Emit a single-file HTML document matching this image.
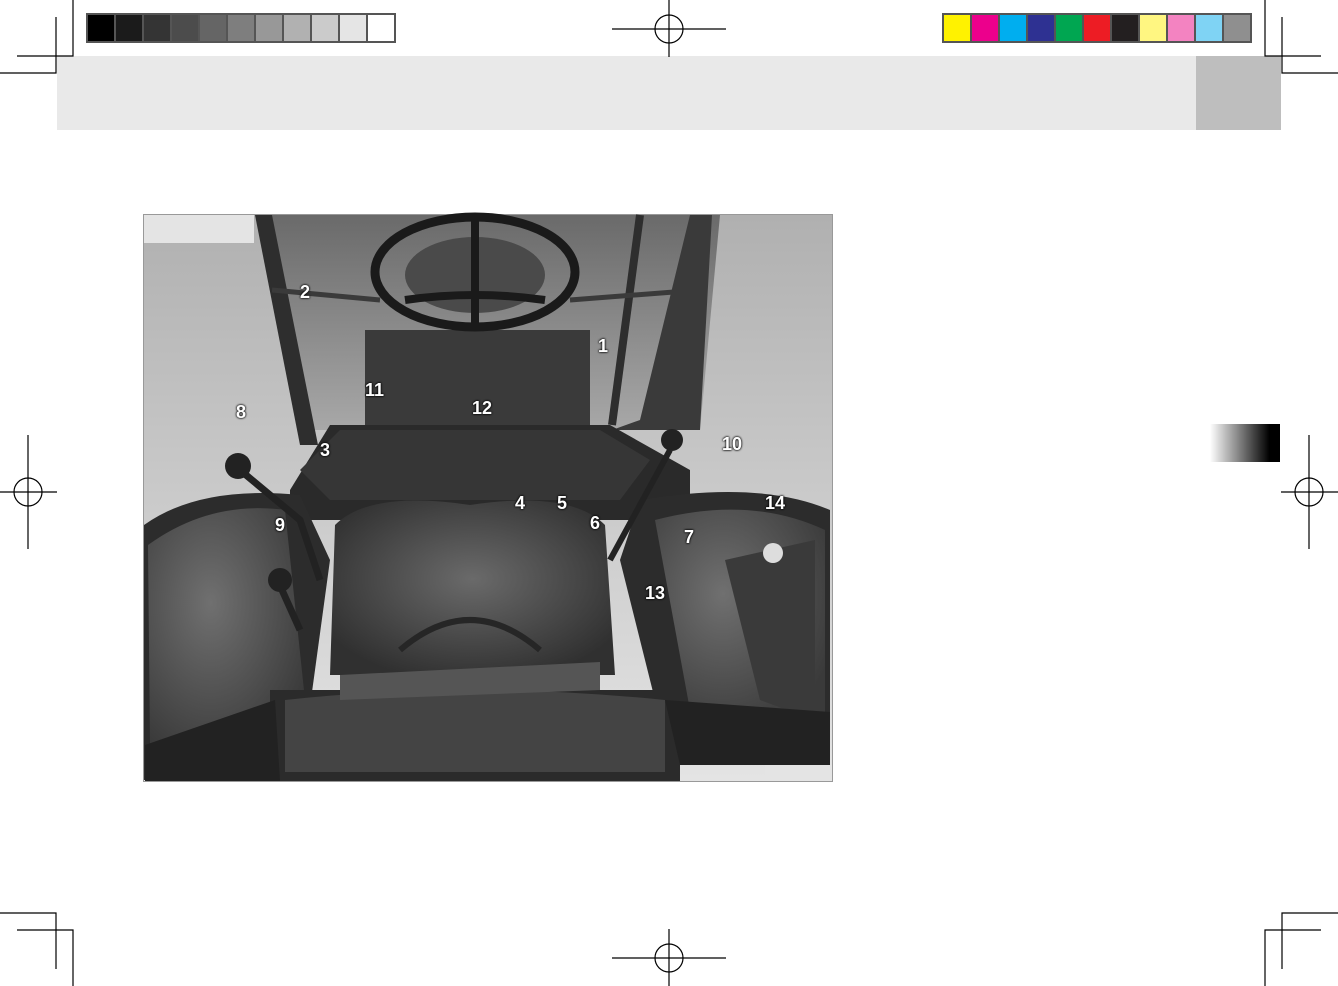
<!DOCTYPE html>
<html><head><meta charset="utf-8"><style>
html,body{margin:0;padding:0;background:#fff}
body{width:1338px;height:986px;position:relative;overflow:hidden;font-family:"Liberation Sans",sans-serif}
.a{position:absolute}
</style></head><body>
<svg class="a" style="left:0;top:0" width="1338" height="986">
<rect x="57" y="56" width="1224" height="74" fill="#e9e9e9"/>
<rect x="1196" y="56" width="85" height="74" fill="#bebebe"/>
<rect x="86" y="13" width="310" height="30" fill="#555"/>
<g>
<rect x="88" y="15" width="26" height="26" fill="#000"/>
<rect x="116" y="15" width="26" height="26" fill="#1b1b1b"/>
<rect x="144" y="15" width="26" height="26" fill="#343434"/>
<rect x="172" y="15" width="26" height="26" fill="#4c4c4c"/>
<rect x="200" y="15" width="26" height="26" fill="#656565"/>
<rect x="228" y="15" width="26" height="26" fill="#7e7e7e"/>
<rect x="256" y="15" width="26" height="26" fill="#989898"/>
<rect x="284" y="15" width="26" height="26" fill="#b1b1b1"/>
<rect x="312" y="15" width="26" height="26" fill="#cbcbcb"/>
<rect x="340" y="15" width="26" height="26" fill="#e5e5e5"/>
<rect x="368" y="15" width="26" height="26" fill="#fff"/>
</g>
<rect x="942" y="13" width="310" height="30" fill="#555"/>
<g>
<rect x="944" y="15" width="26" height="26" fill="#fff200"/>
<rect x="972" y="15" width="26" height="26" fill="#ec008c"/>
<rect x="1000" y="15" width="26" height="26" fill="#00aeef"/>
<rect x="1028" y="15" width="26" height="26" fill="#2e3192"/>
<rect x="1056" y="15" width="26" height="26" fill="#00a651"/>
<rect x="1084" y="15" width="26" height="26" fill="#ed1c24"/>
<rect x="1112" y="15" width="26" height="26" fill="#231f20"/>
<rect x="1140" y="15" width="26" height="26" fill="#fff681"/>
<rect x="1168" y="15" width="26" height="26" fill="#f383c1"/>
<rect x="1196" y="15" width="26" height="26" fill="#7fd3f4"/>
<rect x="1224" y="15" width="26" height="26" fill="#8f8f8f"/>
</g>
<g stroke="#000" stroke-width="1.2" fill="none">
<path d="M73 0V56H17M56 17V73H0"/>
<path d="M1265 0V56H1321M1282 17V73H1338"/>
<path d="M73 986V930H17M56 969V913H0"/>
<path d="M1265 986V930H1321M1282 969V913H1338"/>
<circle cx="669" cy="29" r="14"/><path d="M612 29H726M669 0V57"/>
<circle cx="669" cy="958" r="14"/><path d="M612 958H726M669 929V986"/>
<circle cx="28" cy="492" r="14"/><path d="M0 492H57M28 435V549"/>
<circle cx="1309" cy="492" r="14"/><path d="M1281 492H1338M1309 435V549"/>
</g>
<defs>
<linearGradient id="tab" x1="0" x2="1"><stop offset="0" stop-color="#fff"/><stop offset="0.85" stop-color="#000"/></linearGradient>
<linearGradient id="bg" x1="0" y1="0" x2="0" y2="1"><stop offset="0" stop-color="#b0b0b0"/><stop offset="1" stop-color="#e4e4e4"/></linearGradient>
<linearGradient id="cab" x1="0" y1="0" x2="0" y2="1"><stop offset="0" stop-color="#6a6a6a"/><stop offset="1" stop-color="#a8a8a8"/></linearGradient>
<radialGradient id="seat" cx="0.5" cy="0.45" r="0.6"><stop offset="0" stop-color="#6a6a6a"/><stop offset="1" stop-color="#303030"/></radialGradient>
<radialGradient id="fen" cx="0.4" cy="0.4" r="0.7"><stop offset="0" stop-color="#707070"/><stop offset="1" stop-color="#3a3a3a"/></radialGradient>
</defs>
<rect x="1210" y="424" width="70" height="38" fill="url(#tab)"/>
<rect x="143" y="214" width="690" height="568" fill="#999"/>
<rect x="144" y="215" width="688" height="566" fill="url(#bg)"/>
<rect x="144" y="215" width="110" height="28" fill="#e4e4e4"/>
<path d="M265 215H720L700 430H310Z" fill="url(#cab)"/>
<path d="M255 215L300 445H318L272 215Z" fill="#2e2e2e"/>
<path d="M712 215L700 430H612L640 420L690 215Z" fill="#3a3a3a"/>
<path d="M640 215L612 425" stroke="#2e2e2e" stroke-width="8"/>
<path d="M272 290L380 300M570 300L700 290" stroke="#3a3a3a" stroke-width="5"/>
<path d="M365 330H590V430H365Z" fill="#3a3a3a"/>
<ellipse cx="475" cy="275" rx="70" ry="38" fill="#4a4a4a"/>
<ellipse cx="475" cy="272" rx="100" ry="55" fill="none" stroke="#1a1a1a" stroke-width="9"/>
<path d="M475 215V330" stroke="#1a1a1a" stroke-width="8"/>
<path d="M405 300Q475 290 545 300" stroke="#1a1a1a" stroke-width="8" fill="none"/>
<path d="M290 490L330 425H610L690 470V520H290Z" fill="#2a2a2a"/>
<path d="M300 470L340 430H600L650 460L620 500H330Z" fill="#363636"/>
<path d="M144 525Q200 485 300 495L330 560L300 780H144Z" fill="#2c2c2c"/>
<path d="M148 545Q210 500 285 510L305 700L150 745Z" fill="url(#fen)"/>
<path d="M640 500Q760 480 830 510V760L670 760L620 560Z" fill="#2c2c2c"/>
<path d="M655 520Q750 495 825 530V720L690 710Z" fill="url(#fen)"/>
<path d="M725 560L815 540V720L760 700Z" fill="#3a3a3a"/>
<path d="M335 525Q370 490 470 505Q570 490 605 525L615 675L330 675Z" fill="url(#seat)"/>
<path d="M400 650Q470 590 540 650" stroke="#262626" stroke-width="6" fill="none"/>
<path d="M270 690H680V781H270Z" fill="#2b2b2b"/>
<path d="M285 700Q470 680 665 700V772H285Z" fill="#444"/>
<path d="M145 745L275 700L280 781H145Z" fill="#222"/>
<path d="M665 700L830 712V765L680 765Z" fill="#222"/>
<path d="M340 675L600 662V690L340 700Z" fill="#555"/>
<rect x="765" y="765" width="67" height="16" fill="#e4e4e4"/>
<path d="M240 470L300 520L320 580" stroke="#222" stroke-width="7" fill="none"/>
<circle cx="238" cy="466" r="13" fill="#222"/>
<circle cx="280" cy="580" r="12" fill="#222"/>
<path d="M282 590L300 630" stroke="#222" stroke-width="7"/>
<circle cx="672" cy="440" r="11" fill="#222"/>
<path d="M670 450L610 560" stroke="#222" stroke-width="6"/>
<circle cx="773" cy="553" r="10" fill="#ddd"/>
</svg>
<div class="a" style="left:0;top:0;width:1338px;height:986px;color:#fff;font-weight:bold;font-size:18px;text-shadow:0 0 2px #000,0 0 2px #000">
<span class="a" style="left:300px;top:282px">2</span>
<span class="a" style="left:598px;top:336px">1</span>
<span class="a" style="left:365px;top:380px">11</span>
<span class="a" style="left:472px;top:398px">12</span>
<span class="a" style="left:236px;top:402px">8</span>
<span class="a" style="left:320px;top:440px">3</span>
<span class="a" style="left:722px;top:434px">10</span>
<span class="a" style="left:515px;top:493px">4</span>
<span class="a" style="left:557px;top:493px">5</span>
<span class="a" style="left:765px;top:493px">14</span>
<span class="a" style="left:275px;top:515px">9</span>
<span class="a" style="left:590px;top:513px">6</span>
<span class="a" style="left:684px;top:527px">7</span>
<span class="a" style="left:645px;top:583px">13</span>
</div>
</body></html>
